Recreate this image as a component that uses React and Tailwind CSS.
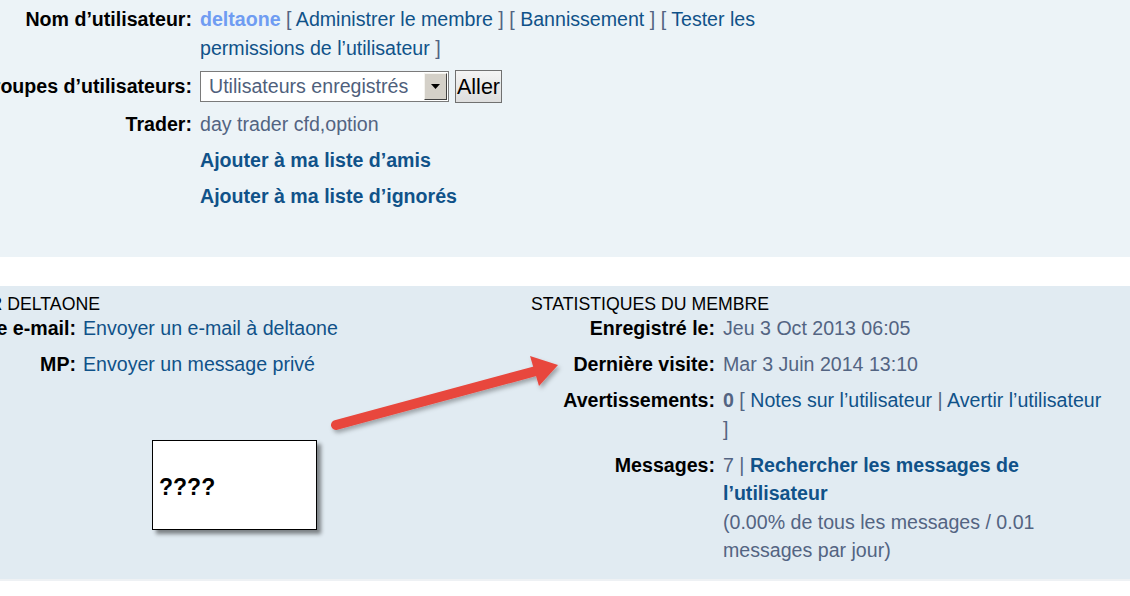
import React from 'react';

const Row = ({ label, labelClass, gapClass = 'gap-2', className = '', children }) => (
  <div className={`flex ${gapClass} ${className}`}>
    <div className={`flex justify-end shrink-0 ${labelClass}`}>
      <span className="whitespace-nowrap font-bold text-black">{label}</span>
    </div>
    <div className="whitespace-nowrap">{children}</div>
  </div>
);

const Link = ({ bold, children }) => (
  <span className={`text-[#105289] ${bold ? 'font-bold' : ''}`}>{children}</span>
);

const FakeSelect = () => (
  <div className="flex items-center gap-[6px]">
    <div className="w-[249px] h-[31px] border border-[#7a7a7a] bg-white flex items-center justify-between">
      <span className="pl-2 text-[#4f5f7c]">Utilisateurs enregistrés</span>
      <div className="w-[23px] h-[27px] mr-[1px] bg-[#d4d0c8] border border-t-[#f4f3ef] border-l-[#f4f3ef] border-r-[#404040] border-b-[#404040] flex items-center justify-center">
        <svg width="9" height="5" viewBox="0 0 9 5">
          <path d="M0 0 H9 L4.5 5 Z" fill="#000" />
        </svg>
      </div>
    </div>
    <div className="w-[47px] h-[33px] border border-[#707070] bg-gradient-to-b from-[#f4f4f4] to-[#dedede] flex items-center justify-center pt-[4px] text-[21.5px] leading-none text-black">
      Aller
    </div>
  </div>
);

export default function App() {
  return (
    <div className="w-[1130px] h-[596px] overflow-hidden bg-white text-[19.6px] leading-[28.5px] text-[#536482] font-['Liberation_Sans',Arial,sans-serif]">
      {/* profile panel */}
      <div className="bg-[#ecf3f7] h-[257px] pt-[5px]">
        <Row label="Nom d’utilisateur:" labelClass="w-[192px]" className="mb-[7.5px]">
          <span className="font-bold text-[#6f9cf2]">deltaone</span> [ <Link>Administrer le membre</Link> ] [ <Link>Bannissement</Link> ] [ <Link>Tester les</Link>
          <br />
          <Link>permissions de l’utilisateur</Link> ]
        </Row>
        <Row label="Groupes d’utilisateurs:" labelClass="w-[192px] items-center" className="mb-[7px] h-[33px] items-center">
          <FakeSelect />
        </Row>
        <Row label="Trader:" labelClass="w-[192px]" className="mb-[7.5px]">
          day trader cfd,option
        </Row>
        <Row label="" labelClass="w-[192px]" className="mb-[7.5px]">
          <Link bold>Ajouter à ma liste d’amis</Link>
        </Row>
        <Row label="" labelClass="w-[192px]">
          <Link bold>Ajouter à ma liste d’ignorés</Link>
        </Row>
      </div>

      <div className="h-[29px]" />

      {/* contact + stats panel */}
      <div className="relative bg-[#e1ebf2] h-[293px] pt-[8px] flex">
        <div className="w-[531px] shrink-0">
          <div className="w-[100px] flex justify-end">
            <span className="whitespace-nowrap text-[17.7px] leading-[20px] text-black">CONTACTER DELTAONE</span>
          </div>
          <Row label="Adresse e-mail:" labelClass="w-[76px]" gapClass="gap-[7px]" className="mb-[7.5px]">
            <Link>Envoyer un e-mail à deltaone</Link>
          </Row>
          <Row label="MP:" labelClass="w-[76px]" gapClass="gap-[7px]">
            <Link>Envoyer un message privé</Link>
          </Row>
        </div>

        <div className="flex-1">
          <div className="text-[17.7px] leading-[20px] text-black whitespace-nowrap">STATISTIQUES DU MEMBRE</div>
          <Row label="Enregistré le:" labelClass="w-[184px]" className="mb-[7.5px]">
            Jeu 3 Oct 2013 06:05
          </Row>
          <Row label="Dernière visite:" labelClass="w-[184px]" className="mb-[7.5px]">
            Mar 3 Juin 2014 13:10
          </Row>
          <Row label="Avertissements:" labelClass="w-[184px]" className="mb-[7.5px]">
            <span className="font-bold">0</span> [ <Link>Notes sur l’utilisateur</Link> | <Link>Avertir l’utilisateur</Link>
            <br />]
          </Row>
          <Row label="Messages:" labelClass="w-[184px]">
            7 | <Link bold>Rechercher les messages de</Link>
            <br />
            <Link bold>l’utilisateur</Link>
            <br />
            (0.00% de tous les messages / 0.01
            <br />
            messages par jour)
          </Row>
        </div>

        {/* annotation overlay */}
        <svg className="absolute left-0 top-0 pointer-events-none" width="1130" height="293" viewBox="0 0 1130 293">
          <defs>
            <filter id="shade" x="-10%" y="-50%" width="120%" height="200%">
              <feDropShadow dx="2" dy="3" stdDeviation="2" floodColor="#000" floodOpacity="0.3" />
            </filter>
          </defs>
          <g filter="url(#shade)">
            <path d="M336 139 L536 85" stroke="#e8473e" strokeWidth="10" strokeLinecap="round" />
            <path d="M558 79 L530 70 L539 100 Z" fill="#e8473e" />
          </g>
        </svg>

        <div className="absolute left-[152px] top-[154px] w-[165px] h-[90px] bg-white border border-black shadow-[4px_4px_4px_rgba(0,0,0,0.45)] flex items-center pl-[6px] pt-[4px]">
          <span className="font-bold text-[23px] leading-none text-black">????</span>
        </div>
      </div>
      <div className="h-[2px] bg-[#eef1f4]" />
    </div>
  );
}
